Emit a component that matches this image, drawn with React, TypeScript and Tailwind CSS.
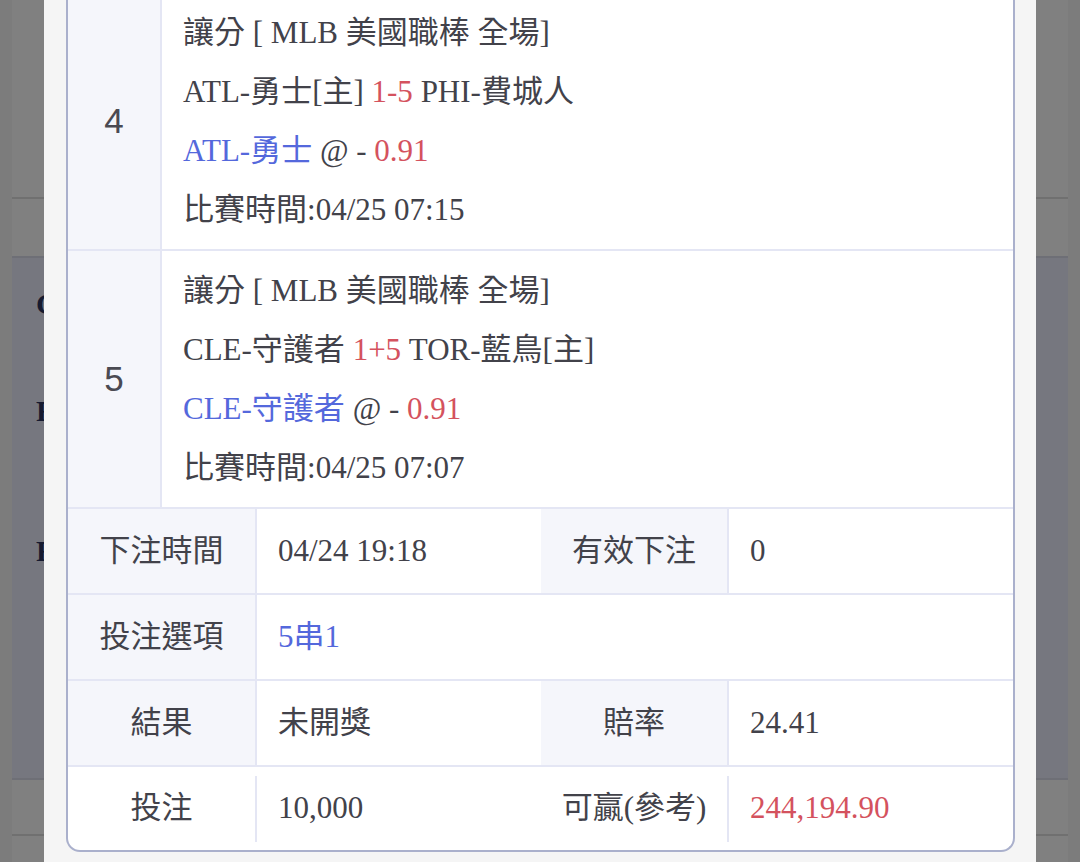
import React from "react";

type Match = {
  no: number;
  home: React.ReactNode;
  score: string;
  away: React.ReactNode;
  pick: string;
  odds: string;
  time: string;
};

const matches: Match[] = [
  { no: 4, home: "ATL-勇士[主]", score: "1-5", away: "PHI-費城人", pick: "ATL-勇士", odds: "0.91", time: "04/25 07:15" },
  { no: 5, home: "CLE-守護者", score: "1+5", away: "TOR-藍鳥[主]", pick: "CLE-守護者", odds: "0.91", time: "04/25 07:07" },
];

function MatchRow({ m }: { m: Match }) {
  return (
    <div className="flex border-b-2 border-[#e4e6f4]">
      <div className="w-[94px] shrink-0 flex items-center justify-center bg-[#f5f6fb] border-r-2 border-[#e4e6f4] font-['Liberation_Sans',sans-serif] text-[35px] text-[#4a4a52]">
        {m.no}
      </div>
      <div className="flex-1 pl-[21px] py-[10px] leading-[59px] bg-white">
        <div>讓分 [ MLB 美國職棒 全場]</div>
        <div>
          {m.home} <span className="text-[#d4525e]">{m.score}</span> {m.away}
        </div>
        <div>
          <span className="text-[#5468dc]">{m.pick}</span> @ - <span className="text-[#d4525e]">{m.odds}</span>
        </div>
        <div>比賽時間:{m.time}</div>
      </div>
    </div>
  );
}

export default function App() {
  return (
    <div className="relative h-[862px] w-full overflow-hidden bg-[#7c7c7c] font-['Liberation_Serif','Noto_Sans_CJK_TC',serif]">
      {/* page under the overlay */}
      <div className="mx-[12px] flex flex-col bg-[#808080] text-[30px] font-bold text-[#161a30]">
        <div className="h-[199px] border-b-2 border-[#707070]"></div>
        <div className="h-[57px]"></div>
        <div className="flex flex-col pl-[24px] bg-[#76777f] border-t-2 border-[#6e6f76] border-b-2">
          <div className="h-[90px] flex items-center">CLE</div>
          <div className="h-[124px] flex items-center">FAV</div>
          <div className="h-[156px] flex items-center">FAV</div>
          <div className="h-[150px]"></div>
        </div>
        <div className="h-[56px] border-b-2 border-[#707070]"></div>
        <div className="h-[30px]"></div>
      </div>

      {/* modal */}
      <div className="absolute top-0 bottom-0 left-[44px] w-[992px] bg-[#f5f5f5] pl-[22px] pr-[21px]">
        <div className="-mt-[7px] rounded-b-[14px] border-x-2 border-b-2 border-[#aab0cc] bg-white overflow-hidden text-[31px] text-[#42424a]">
          {matches.map((m) => (
            <MatchRow key={m.no} m={m} />
          ))}

          <div className="flex h-[86px] border-b-2 border-[#e4e6f4]">
            <div className="w-[189px] border-r-2 border-[#e4e6f4] flex">
              <div className="flex-1 flex items-center justify-center bg-[#f5f6fb]">下注時間</div>
            </div>
            <div className="w-[284px] flex items-center pl-[21px]">04/24 19:18</div>
            <div className="w-[188px] border-r-2 border-[#e4e6f4] flex">
              <div className="flex-1 flex items-center justify-center bg-[#f5f6fb]">有效下注</div>
            </div>
            <div className="flex-1 flex items-center pl-[21px]">0</div>
          </div>

          <div className="flex h-[86px] border-b-2 border-[#e4e6f4]">
            <div className="w-[189px] border-r-2 border-[#e4e6f4] flex">
              <div className="flex-1 flex items-center justify-center bg-[#f5f6fb]">投注選項</div>
            </div>
            <div className="flex-1 flex items-center pl-[21px] text-[#5468dc]">5串1</div>
          </div>

          <div className="flex h-[86px] border-b-2 border-[#e4e6f4]">
            <div className="w-[189px] border-r-2 border-[#e4e6f4] flex">
              <div className="flex-1 flex items-center justify-center bg-[#f5f6fb]">結果</div>
            </div>
            <div className="w-[284px] flex items-center pl-[21px]">未開獎</div>
            <div className="w-[188px] border-r-2 border-[#e4e6f4] flex">
              <div className="flex-1 flex items-center justify-center bg-[#f5f6fb]">賠率</div>
            </div>
            <div className="flex-1 flex items-center pl-[21px]">24.41</div>
          </div>

          <div className="flex h-[83px]">
            <div className="w-[187px] flex items-center justify-center">投注</div>
            <div className="w-[2px] h-[66px] self-center bg-[#e4e6f4]"></div>
            <div className="w-[284px] flex items-center pl-[21px]">10,000</div>
            <div className="w-[186px] flex items-center justify-center">可贏(參考)</div>
            <div className="w-[2px] h-[66px] self-center bg-[#e4e6f4]"></div>
            <div className="flex-1 flex items-center pl-[21px] text-[#d4525e]">244,194.90</div>
          </div>
        </div>
      </div>
    </div>
  );
}
